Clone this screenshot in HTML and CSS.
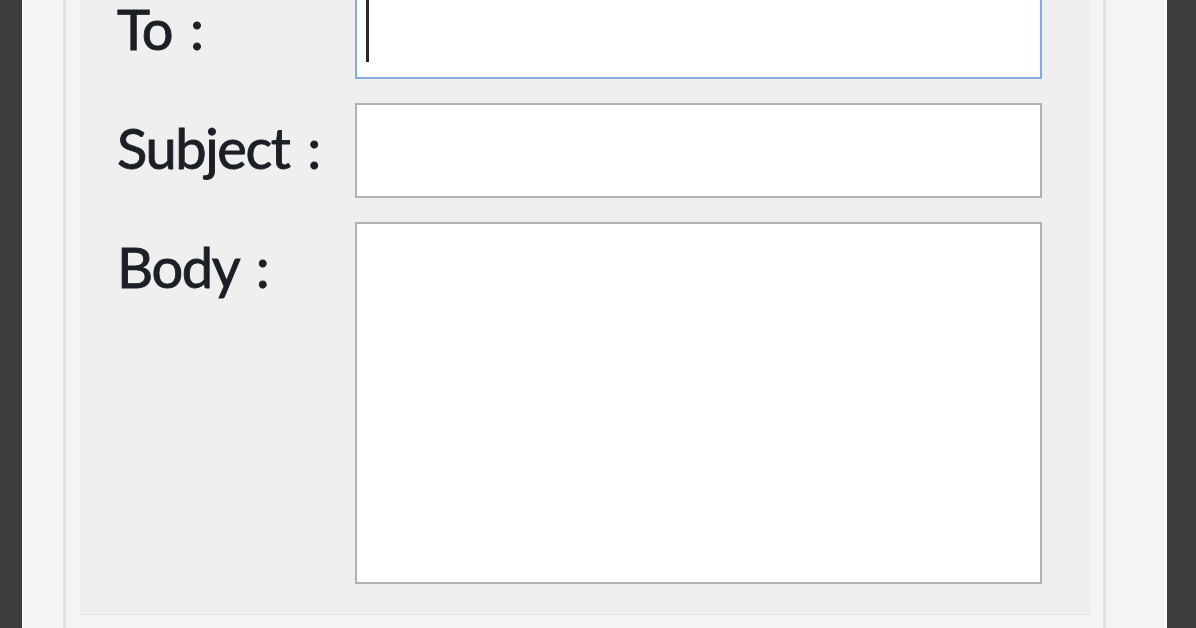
FILE: index.html
```html
<!DOCTYPE html>
<html lang="en">
<head>
<meta charset="utf-8">
<title>Compose</title>
<link rel="stylesheet" href="styles.css">
</head>
<body>
<div class="window">
  <div class="group">
    <div class="panel">
      <div class="form">
        <div class="label">To :</div>
        <div class="field field-focus"><span class="caret"></span></div>
        <div class="label">Subject :</div>
        <div class="field"></div>
        <div class="label">Body :</div>
        <div class="field field-body"></div>
      </div>
    </div>
  </div>
</div>
</body>
</html>
```
FILE: styles.css
```css
html, body {
  margin: 0;
  padding: 0;
}
body {
  background: #3d3d3d;
  height: 628px;
  overflow: hidden;
  font-family: Lato, "Open Sans", "Liberation Sans", sans-serif;
}
.window {
  margin-left: 22px;
  width: 1145px;
  height: 628px;
  box-sizing: border-box;
  background: #f4f4f4;
  padding-left: 39px;
  border-left: 2px solid #f9f9f9;
  border-right: 3px solid #f9f9f9;
  overflow: hidden;
}
.group {
  width: 1043px;
  height: 628px;
  box-sizing: border-box;
  border-left: 3px solid #e2e2e2;
  border-right: 3px solid #e2e2e2;
  padding: 0 12px 0 14px;
}
.panel {
  background: #efefef;
  height: 615px;
  box-sizing: border-box;
  border-bottom: 1px solid #e5e5e5;
  padding-left: 37px;
}
.form {
  display: grid;
  grid-template-columns: 238px 687px;
  grid-template-rows: 95px 95px 362px;
  row-gap: 24px;
  transform: translateY(-16px);
}
.label {
  font-size: 56px;
  line-height: 1;
  color: #1c1f26;
  letter-spacing: -1.4px;
  word-spacing: 5px;
  -webkit-text-stroke: 0.9px #1c1f26;
  padding-top: 17px;
}
.field {
  background: #ffffff;
  border: 2px solid #b2b2b2;
  box-sizing: border-box;
}
.field-focus {
  border-color: #86a9df;
  padding: 14px 0 0 9px;
}
.caret {
  display: block;
  width: 3px;
  height: 62px;
  background: #2a2a2a;
}
```
